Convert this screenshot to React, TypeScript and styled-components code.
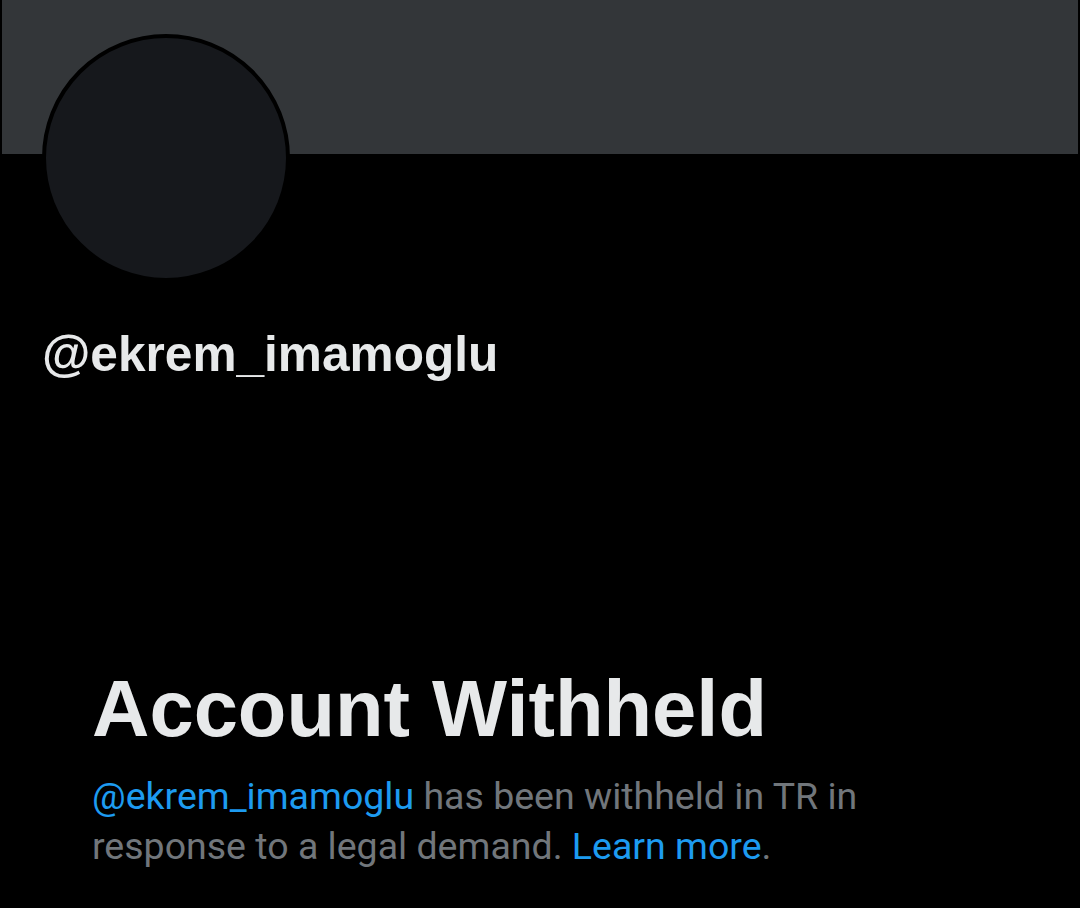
import { createGlobalStyle } from 'styled-components';
import styled from 'styled-components';

const GlobalStyle = createGlobalStyle`
  html, body {
    margin: 0;
    padding: 0;
    background: #000;
  }
  body {
    font-family: "Liberation Sans", Arial, sans-serif;
    -webkit-font-smoothing: antialiased;
  }
`;

const Page = styled.div`
  width: 1080px;
  height: 908px;
  background: #000;
  overflow: hidden;
`;

const Banner = styled.div`
  height: 154px;
  margin: 0 2px;
  background: #333639;
`;

const Avatar = styled.div`
  width: 240px;
  height: 240px;
  margin: -120px 0 0 42px;
  border: 4px solid #000;
  border-radius: 50%;
  background: #16181c;
  position: relative;
`;

const Handle = styled.div`
  margin: 42px 0 0 42px;
  font-size: 49.6px;
  line-height: 60px;
  font-weight: 700;
  color: #e7e9ea;
`;

const Notice = styled.div`
  padding: 0 0 0 92px;
  margin-top: 280px;
`;

const Title = styled.h1`
  margin: 0;
  font-size: 79.5px;
  line-height: 90px;
  font-weight: 700;
  color: #e7e9ea;
`;

const Message = styled.p`
  margin: 17px 0 0;
  width: 820px;
  font-family: Roboto, "Liberation Sans", sans-serif;
  font-size: 37.5px;
  line-height: 50px;
  color: #71767b;
`;

const Link = styled.a`
  color: #1d9bf0;
  text-decoration: none;
`;

export default function App() {
  return (
    <Page>
      <GlobalStyle />
      <Banner />
      <Avatar />
      <Handle>@ekrem_imamoglu</Handle>
      <Notice>
        <Title>Account Withheld</Title>
        <Message>
          <Link href="#">@ekrem_imamoglu</Link> has been withheld in TR in<br />
          response to a legal demand. <Link href="#">Learn more</Link>.
        </Message>
      </Notice>
    </Page>
  );
}
